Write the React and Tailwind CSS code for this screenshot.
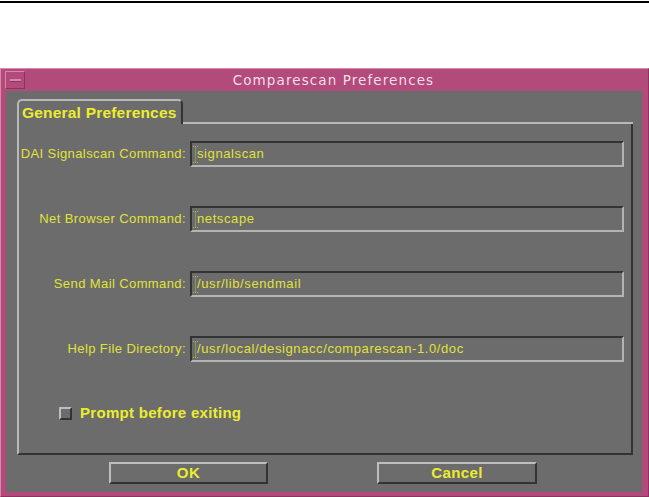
import React from 'react';

const fields = [
  { label: 'DAI Signalscan Command:', value: 'signalscan' },
  { label: 'Net Browser Command:', value: 'netscape' },
  { label: 'Send Mail Command:', value: '/usr/lib/sendmail' },
  { label: 'Help File Directory:', value: '/usr/local/designacc/comparescan-1.0/doc' },
];

function Field({ label, value }) {
  return (
    <div className="flex items-center h-[26px]">
      <div className="w-[171px] pr-[4px] text-right text-[13px] tracking-[0.4px] text-[#e2e236] whitespace-nowrap">{label}</div>
      <div className="w-[434px] h-[26px] flex items-center border-2 border-t-[#333] border-l-[#333] border-b-[#b4b4b4] border-r-[#b4b4b4] bg-[#6c6c6c] pl-[1px]">
        {/* text cursor */}
        <svg width="5" height="17" viewBox="0 0 5 17" className="opacity-80">
          <path d="M0 0.5H5M0 16.5H5M2.5 0.5V16.5" stroke="#c8c850" strokeWidth="1" strokeDasharray="1 1" fill="none" />
        </svg>
        <span className="-ml-[1px] text-[13px] tracking-[0.6px] text-[#e2e236] whitespace-nowrap">{value}</span>
      </div>
    </div>
  );
}

export default function App() {
  return (
    <div className="w-[649px] h-[497px] bg-white flex flex-col overflow-hidden" style={{ fontFamily: '"Liberation Sans", Arial, sans-serif' }}>
      <div className="mt-[1px] h-[2px] bg-black"></div>
      <div className="h-[65px]"></div>

      {/* Window */}
      <div className="flex-1 flex flex-col bg-[#b24b7b] border border-[#d889ab] border-b-[#8a3560] border-r-[#8a3560]">
        {/* Title bar */}
        <div className="h-[22px] flex items-stretch">
          <div className="w-[20px] ml-[4px] my-[2px] flex items-center justify-center border border-[#d889ab] border-b-[#8a3560] border-r-[#8a3560]">
            <div className="w-[11px] h-[3px] bg-[#d889ab] border-b border-[#8a3560]"></div>
          </div>
          <div className="flex-1 flex items-center justify-center pr-[6px] pt-[1px] text-[13.5px] tracking-[1.1px] text-[#f2dde8]" style={{ fontFamily: '"DejaVu Sans", sans-serif' }}>
            Comparescan Preferences
          </div>
        </div>

        {/* Content */}
        <div className="flex-1 ml-[5px] mr-[6px] mb-[4px] bg-[#6c6c6c] flex flex-col pt-[8px] pl-[11px] pr-[9px]">
          {/* Tab */}
          <div className="flex items-end">
            <div className="h-[25px] w-[166px] rounded-t-[5px] border-t-2 border-l-2 border-r-2 border-t-[#b8b8b8] border-l-[#b8b8b8] border-r-[#333] flex items-center pl-[3px] text-[15.5px] tracking-[0.2px] font-bold text-[#ecec2e] whitespace-nowrap">
              General Preferences
            </div>
            <div className="flex-1 border-t-2 border-[#b8b8b8]"></div>
          </div>

          {/* Panel */}
          <div className="h-[331px] border-l-2 border-r-2 border-b-2 border-l-[#b8b8b8] border-r-[#333] border-b-[#333] flex flex-col pt-[17px]">
            <div className="flex flex-col gap-[39px]">
              {fields.map(f => <Field key={f.label} {...f} />)}
            </div>
            <div className="flex items-center mt-[40px] pl-[40px]">
              <div className="w-[13px] h-[13px] border-2 border-t-[#bdbdbd] border-l-[#bdbdbd] border-b-[#333] border-r-[#333] bg-[#6c6c6c]"></div>
              <span className="ml-[8px] text-[15px] tracking-[0.3px] font-bold text-[#ecec2e]">Prompt before exiting</span>
            </div>
          </div>

          {/* Buttons */}
          <div className="flex mt-[7px]">
            <button className="ml-[92px] w-[159px] h-[22px] border-2 border-t-[#bdbdbd] border-l-[#bdbdbd] border-b-[#333] border-r-[#333] bg-[#6c6c6c] text-[15px] tracking-[0.4px] font-bold text-[#ecec2e] flex items-center justify-center">OK</button>
            <button className="ml-[109px] w-[160px] h-[22px] border-2 border-t-[#bdbdbd] border-l-[#bdbdbd] border-b-[#333] border-r-[#333] bg-[#6c6c6c] text-[15px] tracking-[0.4px] font-bold text-[#ecec2e] flex items-center justify-center">Cancel</button>
          </div>
        </div>
      </div>
    </div>
  );
}
